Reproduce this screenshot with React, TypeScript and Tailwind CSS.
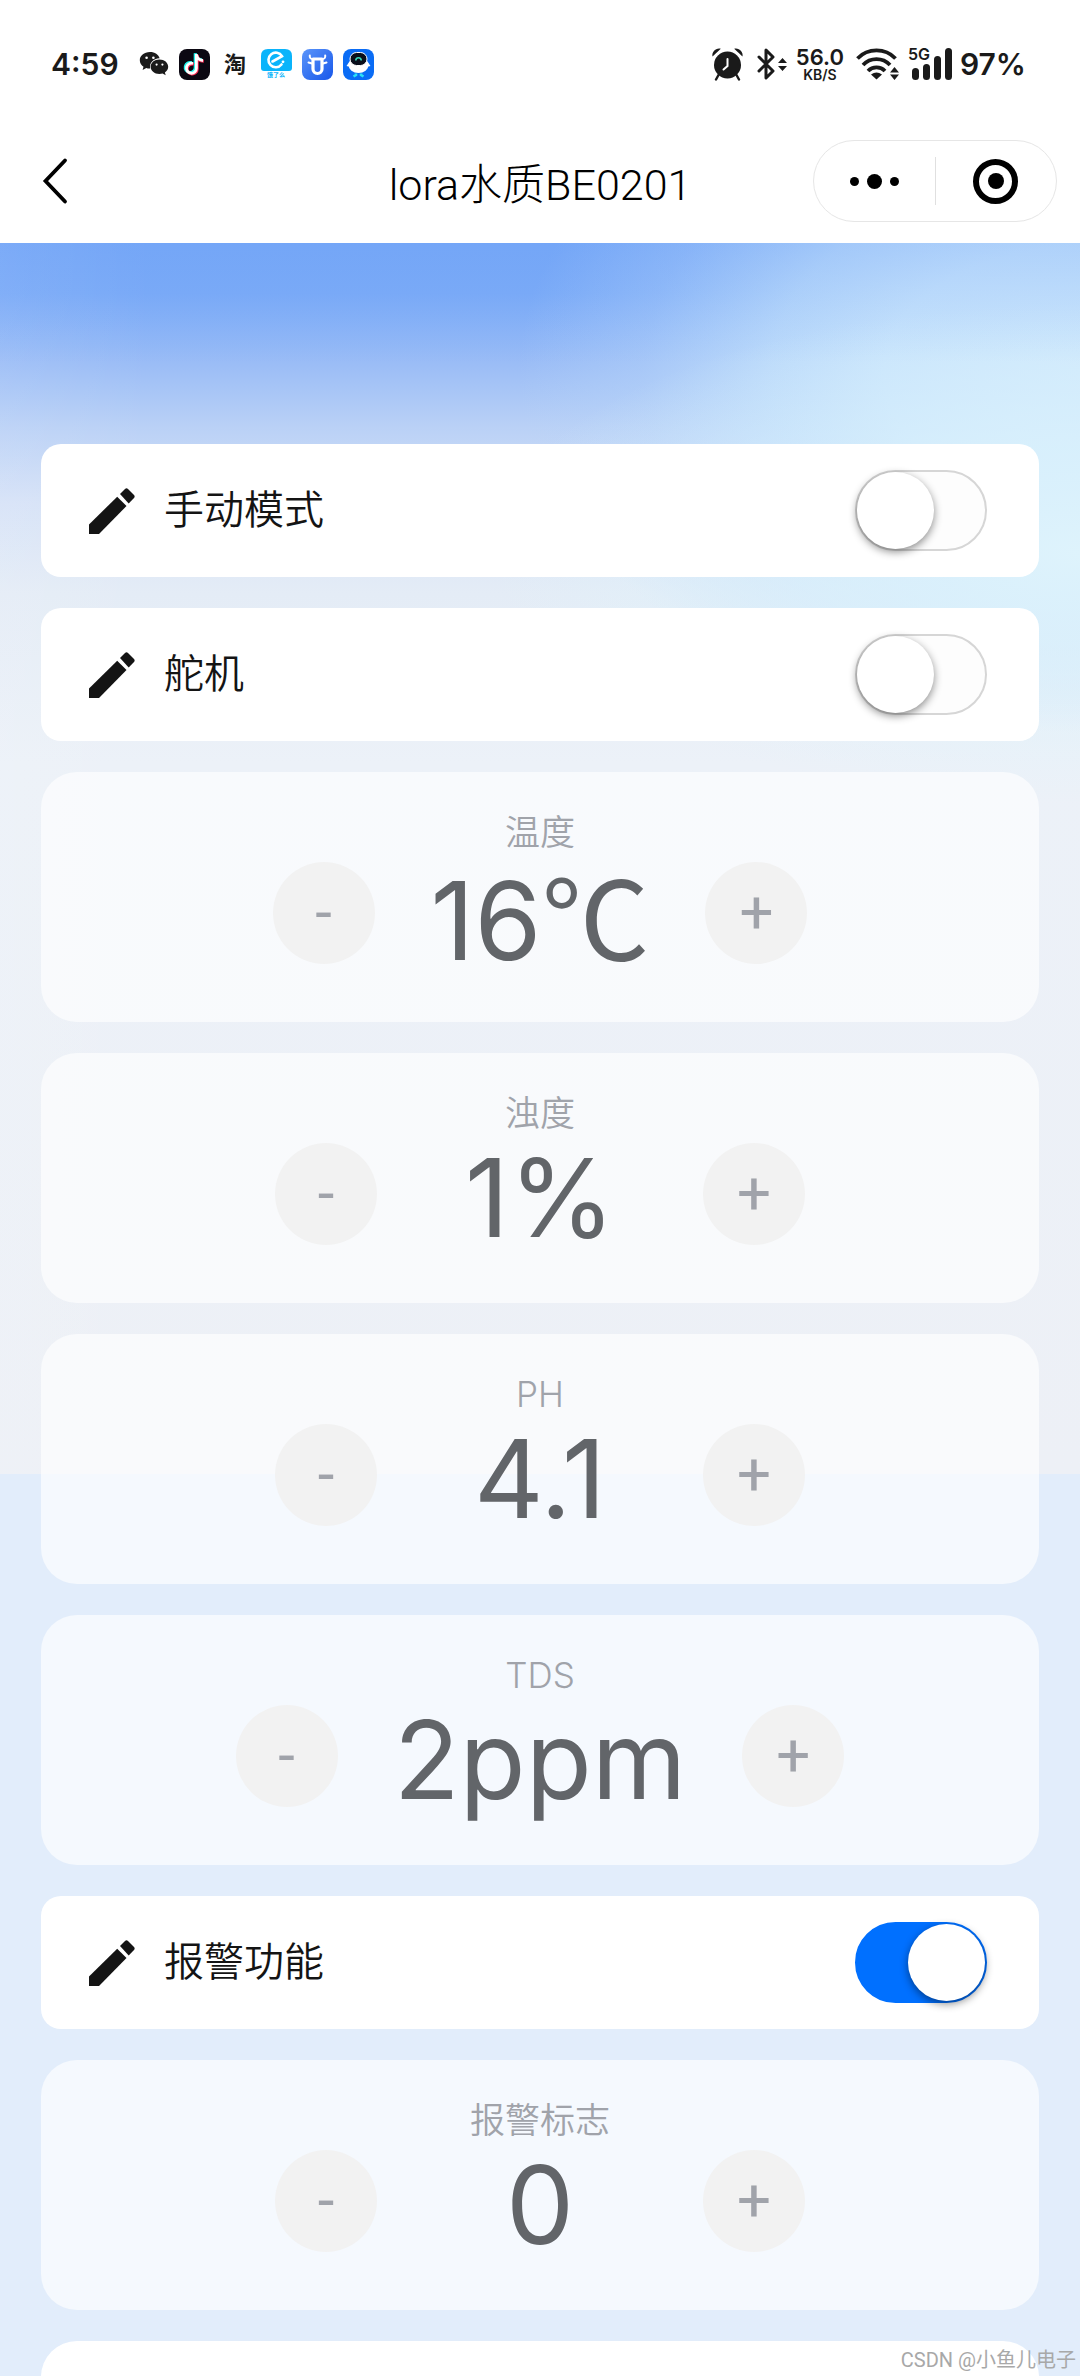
import React, { useState } from 'react';

type SwitchItem = {
  kind: 'switch';
  id: string;
  name: string;
};

type ValueItem = {
  kind: 'value';
  id: string;
  name: string;
  value: number;
  unit: string;
  step: number;
};

type Item = SwitchItem | ValueItem;

const items: Item[] = [
  { kind: 'switch', id: 'manual', name: '手动模式' },
  { kind: 'switch', id: 'servo', name: '舵机' },
  { kind: 'value', id: 'temp', name: '温度', value: 16, unit: '℃', step: 1 },
  { kind: 'value', id: 'turbidity', name: '浊度', value: 1, unit: '%', step: 1 },
  { kind: 'value', id: 'ph', name: 'PH', value: 4.1, unit: '', step: 0.1 },
  { kind: 'value', id: 'tds', name: 'TDS', value: 2, unit: 'ppm', step: 1 },
  { kind: 'switch', id: 'alarm', name: '报警功能' },
  { kind: 'value', id: 'alarmFlag', name: '报警标志', value: 0, unit: '', step: 1 },
];

function AppIcons() {
  return (
    <div className="flex items-center gap-[10px]">
      {/* wechat */}
      <svg className="h-[26px] w-[30px]" viewBox="0 0 30 26" fill="#1a1a1a">
        <path d="M11 1C5 1 .8 4.700.8 9.300c0 2.700 1.500 4.900 3.700 6.400l-.9 3.300 3.700-2c1.200.4 2.400.6 3.800.5C10.300 12 14 7.600 20.600 7.300 19.700 3.500 15.800 1 11 1z" />
        <path d="M20.400 8.600c-5 0-8.800 3.200-8.800 7.200s3.800 7.200 8.800 7.200c1.100 0 2.200-.2 3.200-.5l3.100 1.800-.8-2.800c2-1.300 3.300-3.300 3.300-5.700 0-4-3.800-7.200-8.800-7.200z" />
        <g fill="#fff">
          <circle cx="7.600" cy="6.800" r="1.300" />
          <circle cx="14.400" cy="6.800" r="1.300" />
          <circle cx="17.600" cy="13.600" r="1.100" />
          <circle cx="23.400" cy="13.600" r="1.100" />
        </g>
      </svg>
      {/* douyin */}
      <svg className="size-[31px]" viewBox="0 0 31 31" fill="none">
        <rect width="31" height="31" rx="8" fill="#0b0812" />
        <path d="M14 14.500a5 5 0 1 0 3.400 4.700V5c.3 4 2.700 6.200 6.600 6.500" stroke="#25f4ee" strokeWidth="3" transform="translate(-1.200 -.8)" />
        <path d="M14 14.500a5 5 0 1 0 3.400 4.700V5c.3 4 2.700 6.200 6.600 6.500" stroke="#fe2c55" strokeWidth="3" transform="translate(.8 .8)" />
        <path d="M14 14.500a5 5 0 1 0 3.400 4.700V5c.3 4 2.700 6.200 6.600 6.500" stroke="#fff" strokeWidth="2.800" />
      </svg>
      <span className="w-[31px] text-center text-[22px] leading-8 font-bold">淘</span>
      {/* eleme */}
      <div className="flex h-[31px] w-[31px] flex-col items-center">
        <svg className="h-[22px] w-[31px] shrink-0" viewBox="0 0 31 22" fill="none">
          <path d="M7 0h17q7 0 7 7v12q0 3-3 3H3q-3 0-3-3V7q0-7 7-7z" fill="#0ab4fb" />
          <path d="M20.500 15.500A7.300 7.300 0 1 1 21 7.200L11.500 12.500" stroke="#fff" strokeWidth="2.600" strokeLinecap="round" />
          <circle cx="22" cy="12.800" r="1.400" fill="#fff" />
        </svg>
        <span className="text-[6px] leading-[8px] font-bold whitespace-nowrap text-[#0ab4fb]">饿了么</span>
      </div>
      {/* ox head */}
      <svg className="size-[31px]" viewBox="0 0 31 31" fill="none">
        <defs>
          <linearGradient id="ox" x1="0" y1="0" x2="1" y2="1">
            <stop offset="0" stopColor="#5b95fa" />
            <stop offset="1" stopColor="#1757ea" />
          </linearGradient>
        </defs>
        <rect width="31" height="31" rx="8" fill="url(#ox)" />
        <path d="M11 10h9v10a4.500 4.500 0 0 1-9 0z" stroke="#fff" strokeWidth="3.200" strokeLinejoin="round" />
        <path d="M10.500 10C8.500 10 7.500 8.500 7.800 6.500M20.500 10c2 0 3-1.500 2.700-3.500M6.500 13.500l3.500 1M24.500 13.500l-3.500 1" stroke="#fff" strokeWidth="2" strokeLinecap="round" />
      </svg>
      {/* robot */}
      <svg className="size-[31px]" viewBox="0 0 31 31" fill="none">
        <rect width="31" height="31" rx="8" fill="#0a6cf5" />
        <ellipse cx="15.500" cy="16" rx="10" ry="8" fill="#fff" />
        <path d="M6.500 12.500 3.500 17l4 1M24.500 12.500l3 4.500-4 1" fill="#fff" />
        <rect x="7" y="3.500" width="17" height="13" rx="6.500" fill="#0a0f1c" stroke="#fff" strokeWidth="1" />
        <path d="M12.800 11.500a2.700 2.700 0 0 1 5.400 0" stroke="#36d9b8" strokeWidth="1.600" />
        <path d="M13 24.500v1.500l-2.500 1.500M18 24.500v1.500l2.500 1.500" stroke="#2ce0f4" strokeWidth="2.600" />
      </svg>
    </div>
  );
}

function StatusBar() {
  return (
    <div className="flex h-[128px] items-center justify-between pr-[54px] pl-[51px] font-['Inter','Noto_Sans_CJK_SC',sans-serif] text-[#1a1a1a]">
      <div className="flex items-center gap-5">
        <span className="text-[30px] leading-8 font-semibold">4:59</span>
        <AppIcons />
      </div>

      <div className="flex items-center gap-2">
        {/* alarm clock */}
        <svg className="mr-1 h-[34px] w-[33px]" viewBox="0 0 33 34" fill="#1a1a1a">
          <circle cx="16.500" cy="18" r="13.500" />
          <path d="M1.500 9.500C.5 5 5 .5 9.800 1.800zM31.500 9.500c1-4.500-3.500-9-8.300-7.700z" />
          <path d="m7.500 28-2.500 4.500M25.500 28l2.500 4.500" stroke="#1a1a1a" strokeWidth="2.400" strokeLinecap="round" />
          <path d="M16.500 12v7l-4 3.500" fill="none" stroke="#fff" strokeWidth="2" strokeLinecap="round" />
        </svg>
        {/* bluetooth */}
        <svg className="h-[34px] w-[32px]" viewBox="0 0 32 34" fill="none">
          <path d="m3 10 14 14-7 7V3l7 7L3 24" stroke="#1a1a1a" strokeWidth="3" strokeLinejoin="round" strokeLinecap="round" />
          <path d="m26.500 11 4.500 5h-9zM26.500 24l4.500-5h-9z" fill="#1a1a1a" />
        </svg>
        <div className="flex flex-col items-center font-semibold">
          <span className="text-[22px] leading-[22px]">56.0</span>
          <span className="text-[14px] leading-[14px]">KB/S</span>
        </div>
        {/* wifi */}
        <svg className="ml-1 h-[34px] w-[44px]" viewBox="0 0 44 34" fill="none">
          <g stroke="#1a1a1a" strokeWidth="3.800">
            <path d="M1.500 11.500a26.500 26.500 0 0 1 38 0" />
            <path d="M7 18a18.500 18.500 0 0 1 27 0" />
            <path d="M12 24a11.800 11.800 0 0 1 17 0" />
          </g>
          <path d="M20.500 32.500 15 27.500q5.500-4 11 0z" fill="#1a1a1a" />
          <path d="m38.500 20 4.500 5.500h-9zM38.500 33l4.500-5.500h-9z" fill="#1a1a1a" />
        </svg>
        <div className="relative flex h-[34px] w-[44px] items-end justify-end gap-1 pb-px">
          <span className="absolute -top-px left-0 text-[16px] leading-4 font-semibold">5G</span>
          <span className="h-3 w-[7px] rounded-sm bg-[#1a1a1a]" />
          <span className="h-4 w-[7px] rounded-sm bg-[#1a1a1a]" />
          <span className="h-6 w-[7px] rounded-sm bg-[#1a1a1a]" />
          <span className="h-8 w-[7px] rounded-sm bg-[#1a1a1a]" />
        </div>
        <span className="text-[30px] leading-8 font-semibold">97%</span>
      </div>
    </div>
  );
}

function NavBar() {
  return (
    <div className="grid h-[106px] grid-cols-[1fr_auto_1fr] items-center px-[23px]">
      <button type="button" aria-label="返回" className="justify-self-start pl-4">
        <svg className="h-[48px] w-[30px]" viewBox="0 0 30 48" fill="none">
          <path d="M26 3.500 6.500 24 26 44.500" stroke="#000" strokeWidth="3.800" strokeLinecap="round" />
        </svg>
      </button>
      <h1 className="pt-2 text-[43px] leading-[60px] font-light text-black">lora水质BE0201</h1>
      <div className="flex h-[82px] w-[244px] items-center justify-self-end rounded-full border border-[#e6e6e6]">
        <button type="button" aria-label="更多" className="flex flex-1 items-center justify-center gap-2">
          <span className="size-[9px] rounded-full bg-black" />
          <span className="size-[15px] rounded-full bg-black" />
          <span className="size-[9px] rounded-full bg-black" />
        </button>
        <span className="h-12 w-px bg-[#e0e0e0]" />
        <button type="button" aria-label="关闭" className="flex flex-1 items-center justify-center">
          <span className="flex size-[45px] items-center justify-center rounded-full border-[6px] border-black">
            <span className="size-4 rounded-full bg-black" />
          </span>
        </button>
      </div>
    </div>
  );
}

function SwitchCard({
  item,
  checked,
  onChange,
}: {
  item: SwitchItem;
  checked: boolean;
  onChange: (v: boolean) => void;
}) {
  return (
    <label
      htmlFor={item.id}
      className="flex h-[133px] shrink-0 items-center rounded-[20px] bg-white pr-[52px] pl-12"
    >
      <svg className="size-[46px]" viewBox="0 0 46 46" fill="#141414">
        <path d="M0 36.500V46h10L37.500 18l-9.300-9.300z" />
        <path d="m31 6 5-5q1.500-1.300 3 0l6 6q1.300 1.500 0 3l-5.300 5.500z" />
      </svg>
      <span className="ml-[29px] flex-1 text-[40px] leading-[56px] font-[350] text-[#141414]">{item.name}</span>
      <input
        id={item.id}
        type="checkbox"
        checked={checked}
        onChange={(e) => onChange(e.target.checked)}
        className="h-[81px] w-[132px] appearance-none rounded-full border-2 border-[#d6d6d6] bg-[#fdfdfd] before:block before:size-[77px] before:rounded-full before:bg-white before:shadow-[0_3px_8px_rgba(0,0,0,0.45)] checked:border-[#0070ff] checked:bg-[#0070ff] checked:before:translate-x-[51px]"
      />
    </label>
  );
}

function ValueCard({
  item,
  value,
  onStep,
}: {
  item: ValueItem;
  value: number;
  onStep: (delta: number) => void;
}) {
  return (
    <section className="flex h-[250px] shrink-0 flex-col items-center rounded-[36px] bg-white/65 pt-9">
      <h2 className="font-['Inter','Noto_Sans_CJK_SC',sans-serif] text-[35px] leading-[48px] font-[350] text-[#a0a3aa]">
        {item.name}
      </h2>
      <div className="mt-[6px] flex h-[102px] items-center">
        <button
          type="button"
          aria-label={`${item.name} 减`}
          onClick={() => onStep(-item.step)}
          className="size-[102px] rounded-full bg-[#f2f2f2] text-[60px] leading-[102px] text-[#a0a3aa]"
        >
          -
        </button>
        <output className="mx-14 min-w-[214px] pt-2 text-center font-['Inter',sans-serif] text-[108px] leading-[102px] text-[#626569]">
          {value}
          {/* Inter has no single-glyph ℃ */}
          {item.unit === '℃' ? <span className="font-['Noto_Sans_CJK_SC',sans-serif]">℃</span> : item.unit}
        </output>
        <button
          type="button"
          aria-label={`${item.name} 加`}
          onClick={() => onStep(item.step)}
          className="size-[102px] rounded-full bg-[#f2f2f2] text-[60px] leading-[102px] text-[#a0a3aa]"
        >
          +
        </button>
      </div>
    </section>
  );
}

export default function App() {
  const [switches, setSwitches] = useState<Record<string, boolean>>({
    manual: false,
    servo: false,
    alarm: true,
  });
  const [values, setValues] = useState<Record<string, number>>({
    temp: 16,
    turbidity: 1,
    ph: 4.1,
    tds: 2,
    alarmFlag: 0,
  });

  function stepValue(id: string, delta: number) {
    setValues((prev) => ({
      ...prev,
      [id]: Math.round((prev[id] + delta) * 10) / 10,
    }));
  }

  return (
    <div className="relative flex h-screen flex-col overflow-hidden bg-white font-['Roboto','Noto_Sans_CJK_SC',sans-serif]">
      <header className="shrink-0 bg-white pb-[9px]">
        <StatusBar />
        <NavBar />
      </header>

      <main className="flex min-h-0 flex-1 flex-col gap-[31px] overflow-y-auto bg-[#e2edfb] bg-[linear-gradient(to_bottom,#74a6f74d,#74a6f700_120px),radial-gradient(ellipse_55%_250px_at_100%_310px,#def3fc_0%,#def4fca6_45%,#def5fc00_100%),radial-gradient(ellipse_52%_360px_at_100%_130px,#cee8fc_0%,#c8e4fc_35%,#c0defbe0_55%,#b8d6fa66_78%,#b0cef800_100%),linear-gradient(to_right,#ffffff14,#ffffff00_14%),linear-gradient(to_bottom,#74a6f7_0px,#7aaaf7_50px,#98bbf6_115px,#bad1f6_185px,#d6e2f7_260px,#e4ecf6_350px,#ecf1f8_520px,#edf0f6_1231px)] bg-[length:100%_1231px] bg-no-repeat px-[41px] pt-[201px] pb-10 [scrollbar-width:none]">
        {items.map((item) =>
          item.kind === 'switch' ? (
            <SwitchCard
              key={item.id}
              item={item}
              checked={switches[item.id]}
              onChange={(v) => setSwitches((prev) => ({ ...prev, [item.id]: v }))}
            />
          ) : (
            <ValueCard
              key={item.id}
              item={item}
              value={values[item.id]}
              onStep={(delta) => stepValue(item.id, delta)}
            />
          )
        )}
        <section className="h-[250px] shrink-0 rounded-[36px] bg-white" />
      </main>

      <p className="absolute right-1 bottom-1 text-[20px] leading-6 text-[#a8a8a8]">CSDN @小鱼儿电子</p>
    </div>
  );
}
